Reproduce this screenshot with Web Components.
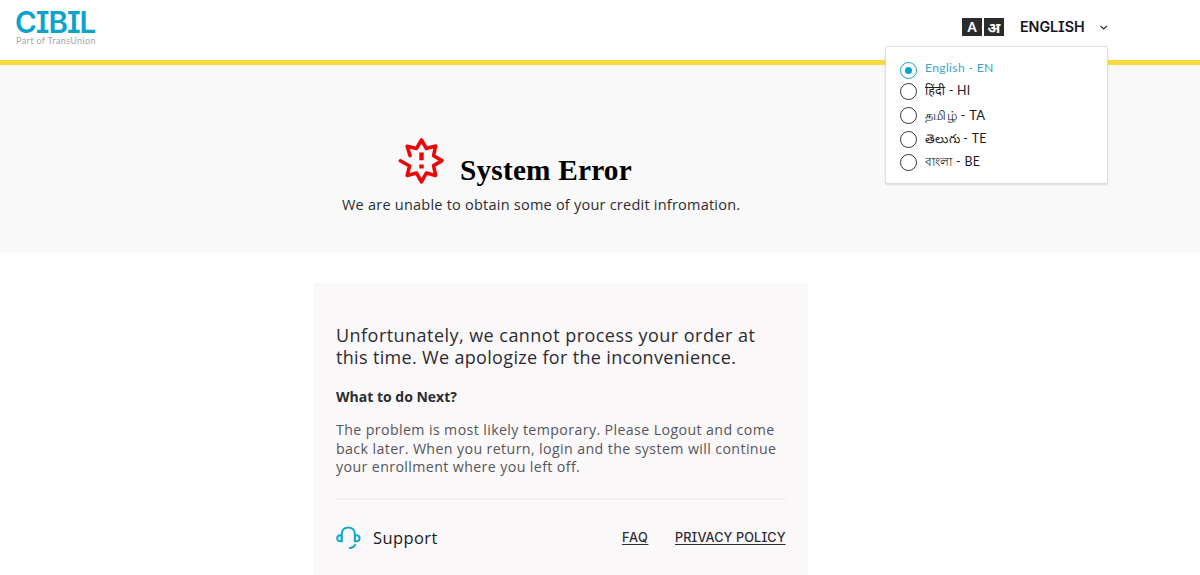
<!DOCTYPE html>
<html lang="en">
<head>
<meta charset="utf-8">
<title>System Error</title>
<style>
  html, body {
    margin: 0;
    height: 575px;
    overflow: hidden;
    background: #fff;
    font-family: "Open Sans", "Noto Sans", "Liberation Sans", sans-serif;
    color: #2c2c33;
  }
</style>
</head>
<body>
<error-page></error-page>

<script>
/**
 * Small base class: stamps the static template of a component
 * into an open shadow root.
 */
class BaseElement extends HTMLElement {
  constructor() {
    super();
    this.attachShadow({ mode: 'open' });
    this.render();
  }

  render() {
    const template = document.createElement('template');
    template.innerHTML = `<style>${this.styles()}</style>${this.markup()}`;
    this.shadowRoot.replaceChildren(template.content.cloneNode(true));
  }

  styles() { return ''; }
  markup() { return ''; }
}

// Brand mark with its tagline
class CibilLogo extends BaseElement {
  styles() {
    return `
      :host {
        display: flex;
        flex-direction: column;
        width: 82px;
        padding-top: 7px;
        white-space: nowrap;
      }

      .name {
        font-family: Inter, Lato, sans-serif;
        font-feature-settings: "cv08";
        font-size: 29.5px;
        line-height: 31px;
        height: 30px;
        font-weight: 600;
        letter-spacing: -1px;
        color: #0ba3cb;
      }

      .tagline {
        padding-left: 1px;
        font-family: Lato, sans-serif;
        font-size: 9px;
        line-height: 7px;
        letter-spacing: 0.38px;
        color: #a4a4b0;
      }
    `;
  }

  markup() {
    return `
      <div class="name">CIBIL</div>
      <div class="tagline">Part of TransUnion</div>
    `;
  }
}

// One radio row of the language menu
class LanguageOption extends BaseElement {
  static get observedAttributes() {
    return ['checked'];
  }

  connectedCallback() {
    this.setAttribute('role', 'radio');
    this.setAttribute('aria-checked', String(this.hasAttribute('checked')));
  }

  attributeChangedCallback() {
    this.setAttribute('aria-checked', String(this.hasAttribute('checked')));
  }

  styles() {
    return `
      :host {
        display: flex;
        align-items: flex-start;
        gap: 8px;
        height: 23.7px;
        font-family: Lato, "Noto Sans", sans-serif;
        font-size: 12.4px;
        line-height: 16px;
        color: #1b1b22;
        white-space: nowrap;
        cursor: pointer;
      }

      .radio {
        display: flex;
        align-items: center;
        justify-content: center;
        box-sizing: border-box;
        width: 17px;
        height: 17px;
        border: 1px solid #33333a;
        border-radius: 50%;
        background: #fff;
      }

      :host([checked]) {
        height: 21.4px;
        font-size: 12.2px;
        color: #3fa3c4;
      }

      :host([checked]) .radio {
        border-color: #0ba3cb;
      }

      :host([checked]) .radio::after {
        content: '';
        width: 7px;
        height: 7px;
        border-radius: 50%;
        background: #0ba3cb;
      }

      .label {
        letter-spacing: 0.3px;
      }

      :host([checked]) .label {
        margin-top: -2px;
      }
    `;
  }

  markup() {
    return `<span class="radio"></span><span class="label"><slot></slot></span>`;
  }
}

// Language switcher with its open menu
class LanguagePicker extends BaseElement {
  connectedCallback() {
    this.shadowRoot.querySelector('.menu').addEventListener('click', this._handleSelect);
  }

  _handleSelect = (event) => {
    const option = event.target.closest('language-option');
    if (!option) return;

    this.shadowRoot.querySelectorAll('language-option')
      .forEach((item) => item.toggleAttribute('checked', item === option));
  }

  styles() {
    return `
      :host {
        display: flex;
        align-items: center;
        position: relative;
        width: 223px;
        height: 54px;
        box-sizing: border-box;
        padding-left: 77px;
        color: #14141b;
      }

      .glyphs {
        display: flex;
        gap: 2px;
      }

      .glyphs span {
        display: flex;
        align-items: center;
        justify-content: center;
        width: 20px;
        height: 18px;
        background: #2b2b2b;
        color: #fff;
        font-family: Lato, "Noto Sans", sans-serif;
        font-size: 13px;
        font-weight: 900;
        line-height: 18px;
      }

      .glyphs span + span {
        font-size: 15px;
        font-weight: 700;
      }

      .current {
        margin-left: 16px;
        width: 66px;
        font-family: Inter, Lato, sans-serif;
        font-feature-settings: "cv08";
        font-size: 14.3px;
        line-height: 18px;
        height: 19px;
        font-weight: 600;
        letter-spacing: -0.05px;
        white-space: nowrap;
      }

      .chevron {
        margin-left: 14px;
      }

      .menu {
        position: absolute;
        top: 46px;
        left: 0;
        z-index: 1;
        box-sizing: border-box;
        width: 223px;
        height: 138px;
        padding: 15px 14px;
        border: 1px solid #dedede;
        border-radius: 2px;
        background: #fff;
        box-shadow: 0 1px 2px rgba(0, 0, 0, 0.12);
      }

      .large {
        font-size: 13px;
      }
    `;
  }

  markup() {
    return `
      <div class="glyphs"><span>A</span><span>अ</span></div>
      <span class="current">ENGLISH</span>
      <svg class="chevron" width="10" height="7" viewBox="0 0 10 7">
        <path d="M1.5 1.7 5 5.1 8.5 1.7" fill="none" stroke="#222" stroke-width="1.2"/>
      </svg>
      <div class="menu" role="radiogroup">
        <language-option checked>English - EN</language-option>
        <language-option>हिंदी - HI</language-option>
        <language-option class="large">தமிழ் - TA</language-option>
        <language-option>తెలుగు - TE</language-option>
        <language-option>বাংলা - BE</language-option>
      </div>
    `;
  }
}

class SiteHeader extends BaseElement {
  styles() {
    return `
      :host {
        display: flex;
        justify-content: space-between;
        align-items: flex-start;
        box-sizing: border-box;
        height: 65px;
        padding: 0 92px 0 15px;
        border-bottom: 5px solid #f8d93f;
        background: #fff;
      }
    `;
  }

  markup() {
    return `<cibil-logo></cibil-logo><language-picker></language-picker>`;
  }
}

// Grey band with the error title
class ErrorBanner extends BaseElement {
  styles() {
    return `
      :host {
        display: block;
        box-sizing: border-box;
        height: 188px;
        padding: 72px 0 0 342px;
        background: #f9f9f9;
      }

      .title {
        display: flex;
        padding-left: 56px;
        gap: 15px;
        height: 56px;
      }

      h1 {
        margin: 16px 0 0;
        font: bold 29.3px/34px "Liberation Serif", serif;
        letter-spacing: 0.2px;
        color: #000;
      }

      p {
        margin: 0;
        font-size: 14.5px;
        line-height: 23px;
        letter-spacing: 0.23px;
        white-space: nowrap;
      }
    `;
  }

  markup() {
    return `
      <div class="title">
        <svg width="47" height="48" viewBox="0 0 47 48" fill="none" stroke="#e90707" stroke-width="3.6" stroke-linejoin="round" stroke-linecap="round">
          <path d="M12 18.6 9.2 9.2 18.5 11.4 23.5 3 28.3 11.4 37.6 9 35.6 18.7 44 23.6 35.6 28.6 37.6 38.4 28.3 36 23.5 44.8 18.5 36 9.2 38.4 11.6 29 2.4 23.8"/>
          <path d="M23.5 15.6V23.3M23.5 27.6V31.6" stroke-width="4.4" stroke-linecap="butt"/>
        </svg>
        <h1>System Error</h1>
      </div>
      <p><slot></slot></p>
    `;
  }
}

// Headset icon followed by its caption
class SupportLink extends BaseElement {
  styles() {
    return `
      :host {
        display: flex;
        align-items: center;
        gap: 12px;
        font-size: 16.5px;
        line-height: 24px;
        letter-spacing: 0.4px;
        color: #1b1b20;
      }
    `;
  }

  markup() {
    return `
      <svg width="25" height="24" viewBox="0 0 25 24" fill="none" stroke="#18a9c9" stroke-width="2" stroke-linecap="round" stroke-linejoin="round">
        <path d="M5.7 15.2V8.4C5.7 4 8.4 1.4 12.3 1.4S18.9 4 18.9 8.4V15.2"/>
        <path d="M5.7 9.2H4.6C2.4 9.2 1.2 10.4 1.2 12.2S2.4 15.2 4.6 15.2H5.7Z"/>
        <path d="M18.9 9.2H20.2C22.4 9.2 23.6 10.4 23.6 12.2S22.4 15.2 20.2 15.2H18.9Z"/>
        <path d="M19.2 18.8C17.8 21 16.2 21.9 13.9 22.1"/>
      </svg>
      <span><slot></slot></span>
    `;
  }
}

class ErrorCard extends BaseElement {
  styles() {
    return `
      :host {
        display: block;
        box-sizing: border-box;
        width: 495px;
        height: 292px;
        margin: 30px 0 0 313px;
        padding: 41px 22px 0 23px;
        background: #faf8f9;
        white-space: nowrap;
      }

      h2 {
        margin: 0;
        font-size: 18px;
        font-weight: 400;
        line-height: 22px;
        letter-spacing: 0.46px;
      }

      h2 span {
        letter-spacing: 0.33px;
      }

      h3 {
        margin: 18px 0 0;
        font-size: 14px;
        font-weight: 700;
        line-height: 22px;
      }

      p {
        margin: 13px 0 0;
        font-size: 14.2px;
        line-height: 18.6px;
        letter-spacing: 0.39px;
        color: #55555c;
      }

      footer {
        display: flex;
        justify-content: space-between;
        align-items: center;
        margin-top: 21px;
        padding-top: 26px;
        border-top: 2px solid #f1eff1;
      }

      nav {
        display: flex;
        gap: 26px;
      }

      a {
        font-family: Inter, Lato, sans-serif;
        font-feature-settings: "cv08";
        font-size: 12.7px;
        font-weight: 500;
        letter-spacing: 0.1px;
        color: #2c2c33;
        text-decoration: underline;
        text-underline-offset: 2px;
      }

      .faq { width: 27px; letter-spacing: 0.6px; }
      .privacy { width: 111px; }
    `;
  }

  markup() {
    return `
      <h2>Unfortunately, we cannot process your order at<br><span>this time. We apologize for the inconvenience.</span></h2>
      <h3>What to do Next?</h3>
      <p>The problem is most likely temporary. Please Logout and come<br>back later. When you return, login and the system will continue<br>your enrollment where you left off.</p>
      <footer>
        <support-link>Support</support-link>
        <nav><a class="faq" href="#">FAQ</a><a class="privacy" href="#">PRIVACY POLICY</a></nav>
      </footer>
    `;
  }
}

class ErrorPage extends BaseElement {
  styles() {
    return `:host { display: block; }`;
  }

  markup() {
    return `
      <site-header></site-header>
      <error-banner>We are unable to obtain some of your credit infromation.</error-banner>
      <error-card></error-card>
    `;
  }
}

// Register the custom elements
customElements.define('cibil-logo', CibilLogo);
customElements.define('language-option', LanguageOption);
customElements.define('language-picker', LanguagePicker);
customElements.define('site-header', SiteHeader);
customElements.define('error-banner', ErrorBanner);
customElements.define('support-link', SupportLink);
customElements.define('error-card', ErrorCard);
customElements.define('error-page', ErrorPage);
</script>
</body>
</html>
